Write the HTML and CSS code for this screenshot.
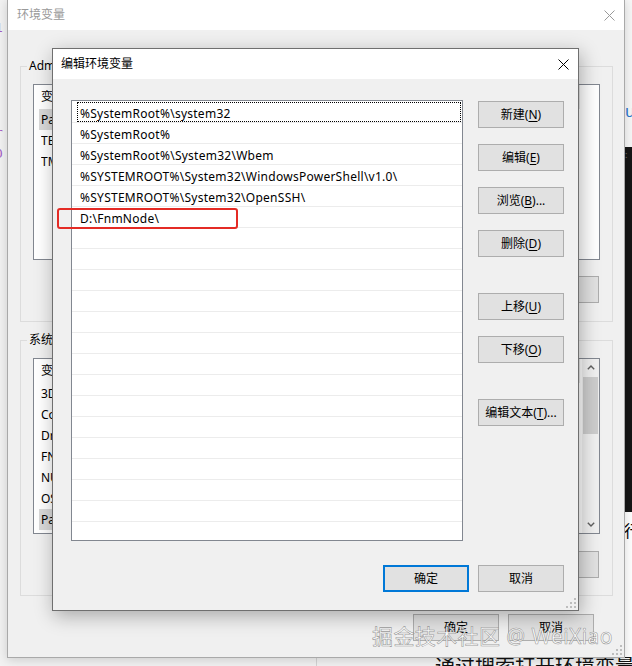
FILE: index.html
```html
<!DOCTYPE html>
<html lang="zh-CN">
<head>
<meta charset="utf-8">
<title>编辑环境变量</title>
<link rel="stylesheet" href="styles.css">
</head>
<body>
<div class="desktop">
  <pre class="editor-strip">1




r
0</pre>
  <div class="right-strip">
    <div class="rs-top"><span>u</span></div>
    <div class="rs-term"><span>:</span></div>
    <div class="rs-doc"><span>行</span></div>
  </div>
  <div class="page-edge"></div>
  <div class="page-text">通过搜索打开环境变量并任务栏</div>
</div>

<section class="window env-window">
  <header class="titlebar">
    <span class="title inactive">环境变量</span>
    <svg class="close" width="11" height="11" viewBox="0 0 11 11"><path d="M0.5 0.5 L10.5 10.5 M10.5 0.5 L0.5 10.5" stroke="#999" stroke-width="1" fill="none"/></svg>
  </header>
  <div class="env-body">
    <fieldset class="group">
      <legend>Administrator 的用户变量(<u>U</u>)</legend>
      <div class="list">
        <div class="list-rows">
          <div class="list-head"><span class="col-name">变量</span><span>值</span></div>
          <div class="list-row selected"><span class="col-name">Path</span><span>C:\Users\Administrator\AppData\Local\Microsoft\WindowsApps;</span></div>
          <div class="list-row"><span class="col-name">TEMP</span><span>%USERPROFILE%\AppData\Local\Temp</span></div>
          <div class="list-row"><span class="col-name">TMP</span><span>%USERPROFILE%\AppData\Local\Temp</span></div>
        </div>
      </div>
      <div class="btn-row">
        <button class="btn">新建(<u>N</u>)...</button>
        <button class="btn">编辑(<u>E</u>)...</button>
        <button class="btn">删除(<u>D</u>)</button>
      </div>
    </fieldset>

    <fieldset class="group group-system">
      <legend>系统变量(<u>S</u>)</legend>
      <div class="list">
        <div class="list-rows">
          <div class="list-head"><span class="col-name">变量</span><span>值</span></div>
          <div class="list-row"><span class="col-name">3DSMAX_PATH</span><span>C:\Program Files\Autodesk\</span></div>
          <div class="list-row"><span class="col-name">ComSpec</span><span>C:\Windows\system32\cmd.exe</span></div>
          <div class="list-row"><span class="col-name">DriverData</span><span>C:\Windows\System32\Drivers\DriverData</span></div>
          <div class="list-row"><span class="col-name">FNM_DIR</span><span>D:\Fnm</span></div>
          <div class="list-row"><span class="col-name">NUMBER_OF_PROCESSORS</span><span>8</span></div>
          <div class="list-row"><span class="col-name">OS</span><span>Windows_NT</span></div>
          <div class="list-row selected"><span class="col-name">Path</span><span>%SystemRoot%\system32;%SystemRoot%;</span></div>
        </div>
        <div class="scrollbar">
          <div class="sb-btn"><svg width="8" height="5" viewBox="0 0 8 5"><path d="M0.8 4.2 L4 1 L7.2 4.2" stroke="#606060" stroke-width="1.4" fill="none"/></svg></div>
          <div class="sb-thumb"></div>
          <div class="sb-track"></div>
          <div class="sb-btn"><svg width="8" height="5" viewBox="0 0 8 5"><path d="M0.8 0.8 L4 4 L7.2 0.8" stroke="#606060" stroke-width="1.4" fill="none"/></svg></div>
        </div>
      </div>
      <div class="btn-row">
        <button class="btn">新建(<u>W</u>)...</button>
        <button class="btn">编辑(<u>I</u>)...</button>
        <button class="btn">删除(<u>L</u>)</button>
      </div>
    </fieldset>

    <div class="env-footer">
      <button class="btn">确定</button>
      <button class="btn">取消</button>
    </div>
  </div>
  <svg class="grip" width="10" height="10" viewBox="0 0 10 10"><g fill="#bdbdbd"><rect x="8" y="0" width="2" height="2"/><rect x="8" y="4" width="2" height="2"/><rect x="4" y="4" width="2" height="2"/><rect x="8" y="8" width="2" height="2"/><rect x="4" y="8" width="2" height="2"/><rect x="0" y="8" width="2" height="2"/></g></svg>
</section>

<section class="window edit-dialog">
  <header class="titlebar dialog-titlebar">
    <span class="title">编辑环境变量</span>
    <svg class="close" width="11" height="11" viewBox="0 0 11 11"><path d="M0.5 0.5 L10.5 10.5 M10.5 0.5 L0.5 10.5" stroke="#000" stroke-width="1" fill="none"/></svg>
  </header>
  <div class="dialog-body">
    <div class="path-list">
      <div class="path-row focused">%SystemRoot%\system32</div>
      <div class="path-row">%SystemRoot%</div>
      <div class="path-row">%SystemRoot%\System32\Wbem</div>
      <div class="path-row">%SYSTEMROOT%\System32\WindowsPowerShell\v1.0\</div>
      <div class="path-row">%SYSTEMROOT%\System32\OpenSSH\</div>
      <div class="path-row">D:\FnmNode\</div>
      <div class="path-row"></div>
      <div class="path-row"></div>
      <div class="path-row"></div>
      <div class="path-row"></div>
      <div class="path-row"></div>
      <div class="path-row"></div>
      <div class="path-row"></div>
      <div class="path-row"></div>
      <div class="path-row"></div>
      <div class="path-row"></div>
      <div class="path-row"></div>
      <div class="path-row"></div>
      <div class="path-row"></div>
      <div class="path-row"></div>
      <div class="path-row"></div>
    </div>
    <div class="side-buttons">
      <button class="btn">新建(<u>N</u>)</button>
      <button class="btn">编辑(<u>E</u>)</button>
      <button class="btn">浏览(<u>B</u>)...</button>
      <button class="btn">删除(<u>D</u>)</button>
      <button class="btn spaced">上移(<u>U</u>)</button>
      <button class="btn">下移(<u>O</u>)</button>
      <button class="btn spaced">编辑文本(<u>T</u>)...</button>
    </div>
    <div class="dialog-footer">
      <button class="btn default">确定</button>
      <button class="btn">取消</button>
    </div>
  </div>
  <div class="highlight"></div>
  <svg class="grip" width="10" height="10" viewBox="0 0 10 10"><g fill="#bdbdbd"><rect x="8" y="0" width="2" height="2"/><rect x="8" y="4" width="2" height="2"/><rect x="4" y="4" width="2" height="2"/><rect x="8" y="8" width="2" height="2"/><rect x="4" y="8" width="2" height="2"/><rect x="0" y="8" width="2" height="2"/></g></svg>
</section>

<div class="watermark">掘金技术社区 @ WeiXiao</div>
</body>
</html>
```

FILE: styles.css
```css
* { box-sizing: border-box; }

html, body { margin: 0; padding: 0; }

body {
  width: 632px;
  height: 666px;
  overflow: hidden;
  position: relative;
  background: #f2f2f2;
  font-family: "Noto Sans", "Noto Sans CJK SC", sans-serif;
  font-size: 12px;
  color: #000;
}

/* ---------- things behind the windows ---------- */
.desktop { position: absolute; inset: 0; }

.editor-strip {
  position: absolute;
  left: -5px;
  top: 17px;
  margin: 0;
  font-family: "DejaVu Sans Mono", monospace;
  font-size: 13px;
  line-height: 21px;
  color: #a45cc4;
}

.right-strip {
  position: absolute;
  left: 625px;
  top: 0;
  width: 7px;
  height: 666px;
  display: flex;
  flex-direction: column;
  overflow: hidden;
  white-space: nowrap;
}
.rs-top {
  height: 147px;
  background: #f7f7f7;
  padding-top: 101px;
  color: #2b78d0;
  font-size: 16px;
  line-height: 20px;
}
.rs-term {
  height: 365px;
  background: #161616;
  color: #777;
  font-size: 9px;
  line-height: 16px;
}
.rs-doc {
  flex: 1;
  background: #fff;
  padding-top: 8px;
  font-family: "Noto Sans CJK SC", sans-serif;
  font-size: 16px;
  line-height: 20px;
  margin-left: -1px;
}

.page-edge {
  position: absolute;
  left: 316px;
  top: 657px;
  width: 1px;
  height: 9px;
  background: #d4d4d4;
}
.page-text {
  position: absolute;
  left: 435px;
  top: 654px;
  font-family: "Noto Sans CJK SC", sans-serif;
  font-size: 20px;
  line-height: 24px;
  white-space: nowrap;
  color: #111;
}

/* ---------- windows ---------- */
.window {
  position: absolute;
  display: flex;
  flex-direction: column;
  background: #f0f0f0;
}

.titlebar {
  flex: none;
  height: 30px;
  background: #fff;
  display: flex;
  align-items: center;
  justify-content: space-between;
  padding: 0 9px 0 9px;
}
.title { line-height: 16px; }
.title.inactive { color: #999; }
.close { display: block; }

.grip { position: absolute; right: 2px; bottom: 2px; }

/* background window */
.env-window {
  left: 7px;
  top: -1px;
  width: 618px;
  height: 659px;
  border: 1px solid #a9a9a9;
  box-shadow: 0 2px 10px rgba(0, 0, 0, 0.16);
}

.env-body {
  flex: 1;
  padding: 28px 11px 0 12px;
}

.group {
  margin: 0;
  min-width: 0;
  border: 1px solid #dcdcdc;
  padding: 10px 12px 18px 12px;
}
.group legend {
  padding: 0 2px;
  margin-left: -6px;
  line-height: 16px;
  font-size: 12px;
  white-space: nowrap;
}
.group-system { margin-top: 10px; padding-bottom: 17px; }
.group-system .btn-row { margin-top: 17px; }

.list {
  height: 176px;
  border: 1px solid #828790;
  background: #fff;
  display: flex;
  overflow: hidden;
}
.list-rows { flex: 1; min-width: 0; }
.list-head {
  width: 546px;
  height: 24px;
  line-height: 24px;
  padding-left: 7px;
  display: flex;
  white-space: nowrap;
  border-right: 1px solid #e5e5e5;
}
.list-row {
  width: 540px;
  height: 21px;
  line-height: 21px;
  margin-left: 5px;
  padding-left: 2px;
  display: flex;
  white-space: nowrap;
  overflow: hidden;
}
.list-row.selected { background: #d9d9d9; }
.col-name { flex: none; width: 178px; overflow: hidden; }

.scrollbar {
  flex: none;
  width: 17px;
  background: #f0f0f0;
  display: flex;
  flex-direction: column;
}
.sb-btn {
  flex: none;
  height: 17px;
  display: flex;
  align-items: center;
  justify-content: center;
}
.sb-btn svg { display: block; }
.sb-thumb {
  flex: none;
  height: 57px;
  margin: 1px 1px 0 1px;
  background: #cdcdcd;
}
.sb-track { flex: 1; }

.btn-row {
  margin-top: 16px;
  display: flex;
  justify-content: flex-end;
  gap: 9px;
  padding-right: 1px;
}

.btn {
  width: 86px;
  height: 27px;
  margin: 0;
  padding: 0;
  background: #e1e1e1;
  border: 1px solid #adadad;
  border-radius: 0;
  font: inherit;
  font-size: 12px;
  color: #000;
  line-height: 16px;
  white-space: nowrap;
}
.btn u { text-underline-offset: 2px; }
.btn.default { border: 2px solid #0078d7; }

.env-footer {
  margin-top: 18px;
  display: flex;
  justify-content: flex-end;
  gap: 9px;
  padding-right: 19px;
}

/* edit dialog */
.edit-dialog {
  left: 52px;
  top: 48px;
  width: 527px;
  height: 563px;
  border: 1px solid #6f6f6f;
  box-shadow: 2px 5px 18px rgba(0, 0, 0, 0.3);
}
.dialog-titlebar { padding: 0 9px 0 8px; }

.dialog-body {
  flex: 1;
  display: grid;
  grid-template-columns: 392px 86px;
  grid-template-rows: 441px 27px;
  column-gap: 15px;
  row-gap: 24px;
  padding: 21px 13px 18px 18px;
}

.path-list {
  border: 1px solid #828790;
  background: #fff;
  padding-top: 1px;
  overflow: hidden;
}
.path-row {
  height: 21px;
  line-height: 19px;
  padding-top: 2px;
  padding-left: 8px;
  border-bottom: 1px solid #ececec;
  white-space: nowrap;
  letter-spacing: 0.26px;
  position: relative;
}
.path-row.focused::after {
  content: "";
  position: absolute;
  left: 5px;
  right: 1px;
  top: 0;
  bottom: 0;
  border: 1px dotted #000;
}

.side-buttons {
  display: flex;
  flex-direction: column;
  gap: 16px;
  padding-top: 1px;
}
.side-buttons .spaced { margin-top: 20px; }

.dialog-footer {
  grid-column: 1 / -1;
  display: flex;
  justify-content: flex-end;
  gap: 9px;
}

.highlight {
  position: absolute;
  left: 4px;
  top: 159px;
  width: 181px;
  height: 21px;
  border: 2px solid #e42b25;
  border-radius: 3px;
}

.watermark {
  position: absolute;
  left: 372px;
  top: 622px;
  font-family: "Noto Sans", "Noto Sans CJK SC", sans-serif;
  font-size: 21px;
  line-height: 28px;
  letter-spacing: 0.4px;
  white-space: nowrap;
  color: rgba(255, 255, 255, 0.88);
  -webkit-text-stroke: 0.6px rgba(110, 110, 110, 0.7);
}
```
